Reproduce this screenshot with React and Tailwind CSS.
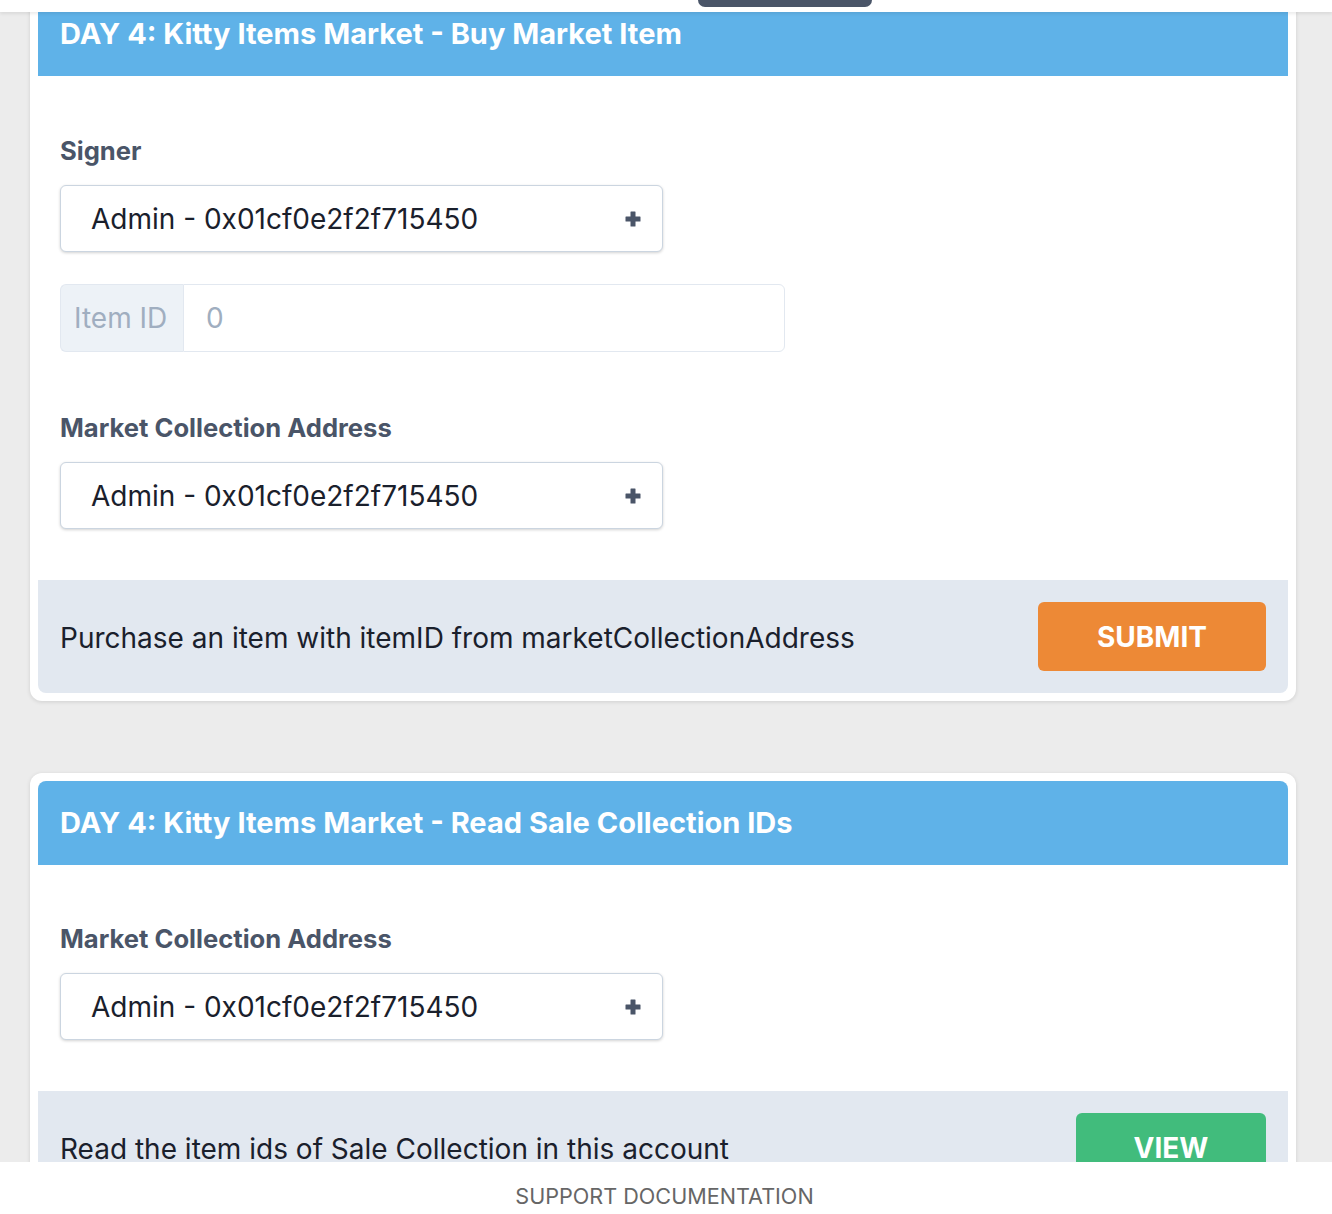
import React from 'react';

const PlusIcon = () => (
    <svg width="16" height="16" viewBox="0 0 16 16" className="text-[#4a5568]">
        <rect x="5.5" y="0.5" width="5" height="15" rx="0.5" fill="currentColor" />
        <rect x="0.5" y="5.5" width="15" height="5" rx="0.5" fill="currentColor" />
    </svg>
);

const AccountSelect = () => (
    <div className="w-[603px] h-[67px] flex items-center justify-between pl-[30px] pr-[21px] bg-white border border-[#cbd5e0] rounded-md shadow-[0_1px_3px_rgba(0,0,0,0.18)]">
        <span className="text-[28px] text-[#1a202c]">Admin - 0x01cf0e2f2f715450</span>
        <PlusIcon />
    </div>
);

const Label = ({ children }) => (
    <div className="h-[36px] flex items-center text-[25.6px] font-bold text-[#4a5568]">{children}</div>
);

const Card = ({ title, children, footerText, action, actionClass }) => (
    <div className="bg-white rounded-xl p-2 shadow-[0_1px_4px_rgba(0,0,0,0.12)]">
        <div className="h-[84px] bg-[#5fb2e8] rounded-t-lg flex items-center px-[22px]">
            <h2 className="text-[29px] font-bold text-white">{title}</h2>
        </div>
        <div className="px-[22px] pb-[51px]">{children}</div>
        <div className="bg-[#e2e8f0] rounded-b-lg p-[22px] flex items-center justify-between">
            <p className="text-[28px] text-[#1a202c] pt-[2px]">{footerText}</p>
            <button className={`h-[69px] rounded-md text-white text-[28px] font-bold ${actionClass}`}>{action}</button>
        </div>
    </div>
);

export default function App() {
    return (
        <div className="relative h-[1214px] overflow-hidden bg-[#ececec] font-['Inter',sans-serif]">
            <div className="absolute top-0 left-0 right-0 h-[12px] bg-white shadow-[0_2px_3px_rgba(0,0,0,0.08)] z-10">
                <div className="mx-auto w-[174px] h-[7px] bg-[#4a5568] rounded-b-lg relative left-[119px]" />
            </div>

            <div className="px-[30px] mt-[-16px] w-[1326px] flex flex-col gap-[72px]">
                <Card
                    title="DAY 4: Kitty Items Market - Buy Market Item"
                    footerText="Purchase an item with itemID from marketCollectionAddress"
                    action="SUBMIT"
                    actionClass="w-[228px] bg-[#ed8936]"
                >
                    <div className="pt-[57px]">
                        <Label>Signer</Label>
                        <div className="mt-4"><AccountSelect /></div>
                        <div className="mt-8 w-[725px] h-[68px] flex">
                            <div className="w-[123px] flex items-center pl-[13px] bg-[#edf2f7] border border-r-0 border-[#e2e8f0] rounded-l-md text-[28px] text-[#a0aec0]">Item ID</div>
                            <div className="flex-1 flex items-center pl-[22px] border border-[#e2e8f0] rounded-r-md text-[28px] text-[#a0aec0]">0</div>
                        </div>
                        <div className="mt-[58px]"><Label>Market Collection Address</Label></div>
                        <div className="mt-4"><AccountSelect /></div>
                    </div>
                </Card>

                <Card
                    title="DAY 4: Kitty Items Market - Read Sale Collection IDs"
                    footerText="Read the item ids of Sale Collection in this account"
                    action="VIEW"
                    actionClass="w-[190px] bg-[#41bc7c]"
                >
                    <div className="pt-[56px]">
                        <Label>Market Collection Address</Label>
                        <div className="mt-4"><AccountSelect /></div>
                    </div>
                </Card>
            </div>

            <div className="absolute bottom-0 left-0 right-0 h-[52px] bg-white flex items-center justify-center z-10">
                <span className="text-[21.6px] text-[#666] pt-[16px] pr-[3px]">SUPPORT DOCUMENTATION</span>
            </div>
        </div>
    );
}
